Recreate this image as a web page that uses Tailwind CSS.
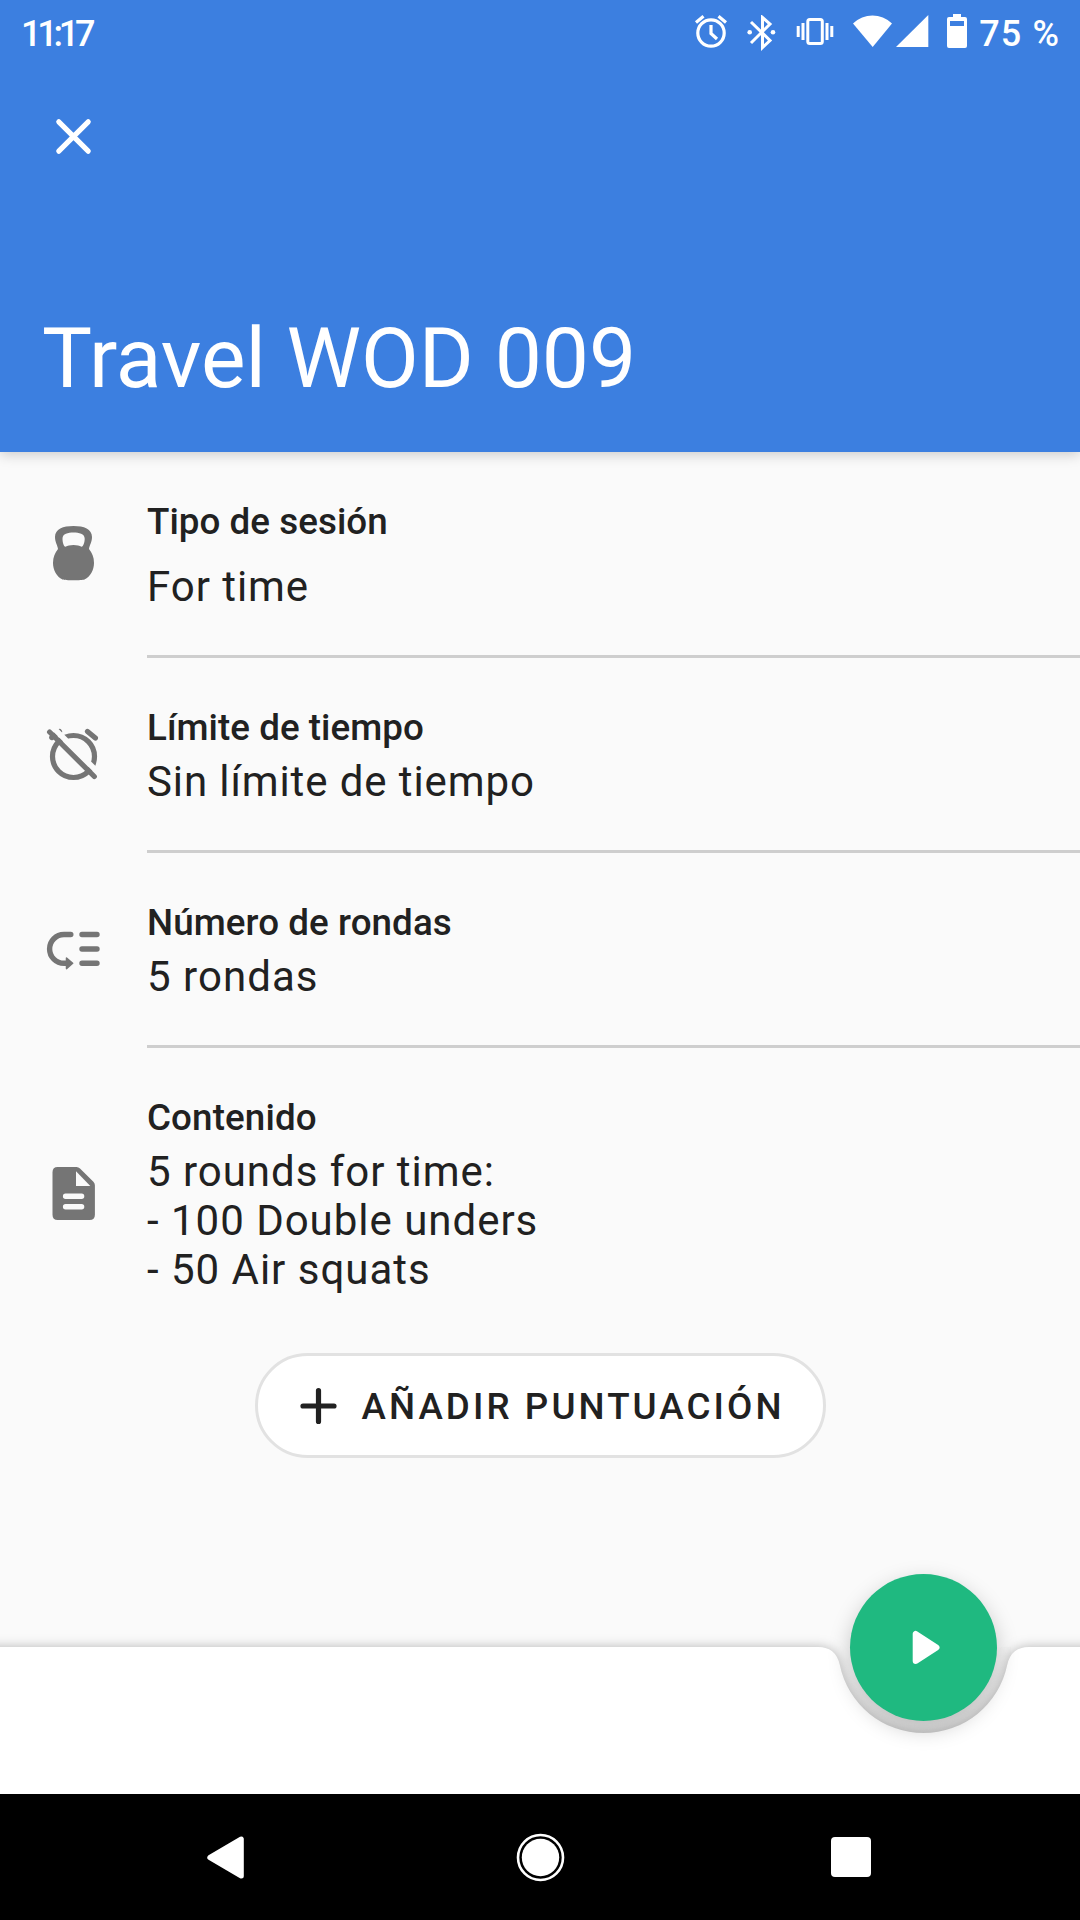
<!DOCTYPE html>
<html lang="es">
<head>
    <meta charset="UTF-8">
    <meta name="viewport" content="width=device-width, initial-scale=1.0">
    <title>Travel WOD 009</title>
    <script src="https://cdn.jsdelivr.net/npm/@tailwindcss/browser@4"></script>
</head>
<body class="bg-[#fafafa] font-['Roboto',sans-serif] text-[#212121]">
    <div class="w-[1080px] h-[1920px] flex flex-col overflow-hidden">

        <!-- Header -->
        <header class="relative h-[452px] shrink-0 flex flex-col bg-[#3c7fe0] text-white shadow-[0_3px_12px_rgba(0,0,0,0.18)]">
            <div class="h-[66px] pl-[21px] pr-5 flex items-center justify-between text-[36px] font-medium">
                <span class="pt-[2px] tracking-[-4.2px]">11:17</span>
                <div class="flex items-center">
                    <svg class="w-9 h-9 mr-[17px]" viewBox="0 0 36 36" fill="none" stroke="#fff" stroke-width="3.2">
                        <circle cx="18" cy="18" r="13.2"/>
                        <path d="M18 10v8.500l6 5.5M3 7.500l7.5-6.2M33 7.500l-7.5-6.2"/>
                    </svg>
                    <svg class="w-[30px] h-9 mr-5" viewBox="0 0 30 36" fill="none" stroke="#fff" stroke-width="3">
                        <path d="M5 7L24 25.500l-7.500 7v-30l7.500 6.500L5 28"/>
                        <circle cx="3.7" cy="17.300" r="2.300" fill="#fff" stroke="none"/>
                        <circle cx="27" cy="17.300" r="2.300" fill="#fff" stroke="none"/>
                    </svg>
                    <svg class="w-[38px] h-9 mr-[19px]" viewBox="0 0 38 36" fill="none" stroke="#fff" stroke-width="3">
                        <rect x="11.8" y="4.600" width="14.5" height="24" rx="2"/>
                        <path d="M2.2 11v11M7 8v17M31 8v17M35.8 11v11"/>
                    </svg>
                    <svg class="w-[76px] h-9 mr-[18px]" viewBox="0 0 76 36" fill="#fff">
                        <path d="M0 8.600C11 -2.300 28 -2.300 39 8.600L19.7 32z"/>
                        <path d="M75.3 0v32H43z"/>
                    </svg>
                    <svg class="w-5 h-9 mr-3 overflow-visible" viewBox="0 0 20 36" fill="#fff" fill-rule="evenodd">
                        <path d="M6 -1h8v3h4a2 2 0 0 1 2 2v27a2 2 0 0 1-2 2H2a2 2 0 0 1-2-2V4a2 2 0 0 1 2-2h4zM3 6v5h14V6z"/>
                    </svg>
                    <span class="pt-[2px] tracking-[1.1px]">75 %</span>
                </div>
            </div>
            <svg class="w-[63px] h-[63px] ml-[42px] mt-[39px]" viewBox="0 0 63 63" fill="none" stroke="#fff" stroke-width="5.2" stroke-linecap="round">
                <path d="M16.8 16.8l29.4 29.4M46.2 16.8L16.8 46.2"/>
            </svg>
            <h1 class="mt-auto mb-11 ml-[42px] text-[84px] leading-[98px] tracking-[-0.05px]">Travel WOD 009</h1>
        </header>

        <!-- Session details -->
        <main class="grow flex flex-col">
            <section class="flex">
                <div class="w-[147px] pl-[42px] pb-[3px] flex items-center">
                    <svg class="w-[63px] h-[63px]" viewBox="0 0 63 63" fill="#757575" fill-rule="evenodd">
                        <path d="M31.500 4C21 4 13 7 13 15c0 5 2.500 8 3 12-3 4-5 8-5 14 0 7 3.500 13.500 9.500 16.500 2.500 1 19.500 1 22 0C48.500 54.500 52 48 52 41c0-6-2-10-5-14 .5-4 3-7 3-12C50 7 42 4 31.500 4zM31.500 10.500c5.500 0 11.200 1.200 11.200 6.200 0 3.300-1.400 8-3.200 8-2-.8-4.500-1.700-8-1.700s-6 .9-8 1.700c-1.800 0-3-4.700-3-8 0-5 5.500-6.200 11-6.200z"/>
                    </svg>
                </div>
                <div class="grow border-b-3 border-[#cecece] pt-12 pb-11">
                    <h2 class="text-[36.75px] leading-[43px] font-medium tracking-[0.04px]">Tipo de sesión</h2>
                    <p class="mt-[19px] text-[42px] leading-[49px] tracking-[0.95px]">For time</p>
                </div>
            </section>

            <section class="flex">
                <div class="w-[147px] pl-[42px] pb-[5px] flex items-center">
                    <svg class="w-[63px] h-[63px]" viewBox="0 0 63 63" fill="none" stroke="#757575" stroke-width="5.2" stroke-linecap="round">
                        <circle cx="31.5" cy="34.500" r="21"/>
                        <path d="M45.500 9.500l7.900 6.500M17.500 9.500L9.800 15.600"/>
                        <path d="M2 -3.600L60 54.400" stroke="#fafafa" stroke-width="5.600" stroke-linecap="butt"/>
                        <path d="M7.600 10l44.700 44.500"/>
                    </svg>
                </div>
                <div class="grow border-b-3 border-[#cecece] pt-12 pb-11">
                    <h2 class="text-[36.75px] leading-[43px] font-medium tracking-[0.04px]">Límite de tiempo</h2>
                    <p class="mt-2 text-[42px] leading-[49px] tracking-[0.9px]">Sin límite de tiempo</p>
                </div>
            </section>

            <section class="flex">
                <div class="w-[147px] pl-[42px] pb-[3px] flex items-center">
                    <svg class="w-[63px] h-[63px]" viewBox="0 0 63 63" fill="none" stroke="#757575" stroke-width="5.4" stroke-linecap="round">
                        <path d="M40 16.500h15M40 31h15M40 45.300h15M28.800 16.500H22a14.400 14.400 0 0 0 0 28.800h4"/>
                        <path d="M24.500 40l6.200 5.300-6.200 5.300z" fill="#757575" stroke-width="1.500" stroke-linejoin="round"/>
                    </svg>
                </div>
                <div class="grow border-b-3 border-[#cecece] pt-12 pb-11">
                    <h2 class="text-[36.75px] leading-[43px] font-medium tracking-[0.08px]">Número de rondas</h2>
                    <p class="mt-2 text-[42px] leading-[49px] tracking-[1.05px]">5 rondas</p>
                </div>
            </section>

            <section class="flex">
                <div class="w-[147px] pl-[42px] flex items-center">
                    <svg class="w-[63px] h-[63px]" viewBox="0 0 63 63">
                        <path d="M15.700 5H34.500q2 0 3.500 1.500L51.400 19.800q1.500 1.500 1.500 3.500V52.700q0 5.300-5.300 5.300H15.700q-5.200 0-5.200-5.300V10.300Q10.500 5 15.700 5z" fill="#757575"/>
                        <path d="M34 9.300V24h14.300z" fill="#fafafa"/>
                        <path d="M23.600 34.200h16M23.600 44.800h16" stroke="#fafafa" stroke-width="5.400" stroke-linecap="round"/>
                    </svg>
                </div>
                <div class="grow pt-12 pb-[45px]">
                    <h2 class="text-[36.75px] leading-[43px] font-medium tracking-[0.12px]">Contenido</h2>
                    <p class="mt-2 text-[42px] leading-[49px] tracking-[0.98px]">5 rounds for time:<br>- 100 Double unders<br>- 50 Air squats</p>
                </div>
            </section>

            <button class="self-center mt-[14px] w-[571px] h-[105px] flex items-center pl-[39px] rounded-full border-3 border-[#e2e2e2] bg-white text-[36.75px] font-medium tracking-[3.08px] whitespace-nowrap">
                <svg class="w-[42px] h-[42px] mr-[23px] shrink-0" viewBox="0 0 42 42" fill="none" stroke="#212121" stroke-width="5.2" stroke-linecap="round">
                    <path d="M21.500 5.500v31M6 21h31"/>
                </svg>
                <span class="pt-[3px]">AÑADIR PUNTUACIÓN</span>
            </button>
        </main>

        <!-- Bottom bar with the notch for the play button -->
        <footer class="relative h-[147px] shrink-0">
            <svg class="w-[1080px] h-[147px] overflow-visible" viewBox="0 0 1080 147" fill="#fff">
                <defs>
                    <linearGradient id="notch" x1="0.35" y1="0" x2="0.65" y2="1">
                        <stop offset="0" stop-opacity="0"/>
                        <stop offset="1" stop-opacity="0.06"/>
                    </linearGradient>
                </defs>
                <path d="M836 0h175v88H836z" fill="url(#notch)"/>
                <path class="drop-shadow-[0_0_6px_rgba(0,0,0,0.27)]" d="M-30 0H818Q836 0 839.800 18A85.500 85.500 0 0 0 1007.200 18Q1011 0 1029 0H1110V170H-30z"/>
            </svg>
            <button class="absolute left-[850px] top-[-73px] w-[147px] h-[147px] rounded-full bg-[#1fb980] shadow-[0_8px_22px_rgba(0,0,0,0.22)] flex items-center justify-center">
                <svg class="w-[63px] h-[63px]" viewBox="0 0 63 63" fill="#fff" stroke="#fff" stroke-width="6" stroke-linejoin="round">
                    <path d="M23.700 18v27L44.500 31.500z"/>
                </svg>
            </button>
        </footer>

        <!-- System navigation -->
        <nav class="relative h-[126px] shrink-0 bg-black flex items-center justify-between px-[194px]">
            <svg class="w-[63px] h-[63px]" viewBox="0 0 63 63" fill="#fff" stroke="#fff" stroke-width="5" stroke-linejoin="round">
                <path d="M47.300 13v37L15.800 31.500z"/>
            </svg>
            <svg class="w-[63px] h-[63px]" viewBox="0 0 63 63">
                <circle cx="31.5" cy="31.5" r="22.500" fill="none" stroke="#fff" stroke-width="2.600"/>
                <circle cx="31.5" cy="31.5" r="18.700" fill="#fff"/>
            </svg>
            <div class="w-10 h-10 ml-2 mr-[15px] rounded bg-white"></div>
        </nav>
    </div>
</body>
</html>
